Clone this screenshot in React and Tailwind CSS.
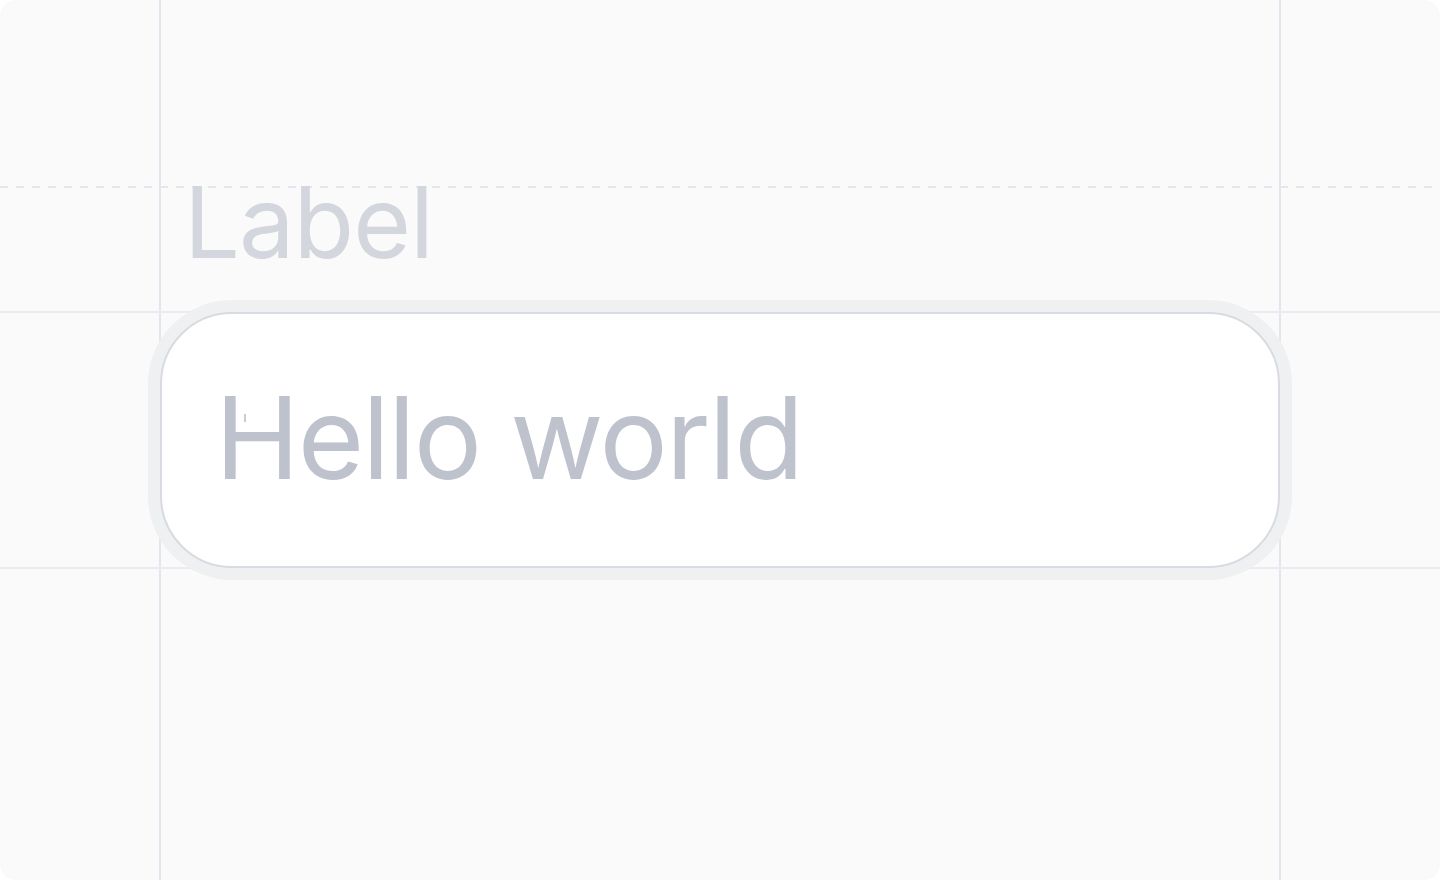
export default function App() {
  return (
    <div className="relative h-[880px] w-[1440px] overflow-hidden rounded-2xl bg-[#fafafa]" style={{ fontFamily: 'Inter, "Noto Sans", sans-serif' }}>
      {/* guide lines */}
      <div className="pointer-events-none absolute inset-y-0 left-[159px] w-[2px] bg-[#e3e6ef]" />
      <div className="pointer-events-none absolute inset-y-0 left-[1279px] w-[2px] bg-[#e3e6ef]" />
      <div className="pointer-events-none absolute inset-x-0 top-[311px] h-[2px] bg-[#eaebf0]" />
      <div className="pointer-events-none absolute inset-x-0 top-[567px] h-[2px] bg-[#eaebf0]" />
      <div className="pointer-events-none absolute inset-x-0 top-[186px] h-[2px] bg-[repeating-linear-gradient(90deg,#e4e6ec_0_8px,transparent_8px_16px)]" />

      <div className="relative flex w-[1280px] flex-col pl-[160px] pt-[173px]">
        <label className="pl-[24px] text-[99px] leading-none tracking-[-0.01em] text-[#d3d6dd]">Label</label>
        <div className="relative mt-[40px] flex h-[256px] w-[1120px] items-center rounded-[72px] border-2 border-[#d8dbe1] bg-white pb-[4px] pl-[53px] ring-[12px] ring-[#eff0f2]">
          <span className="text-[114px] leading-none tracking-[-0.017em] text-[#bec2cc]">Hello world</span>
          <span className="absolute left-[82px] top-[100px] h-[8px] w-[2px] bg-[#c8ccd3]" />
        </div>
      </div>
    </div>
  )
}
